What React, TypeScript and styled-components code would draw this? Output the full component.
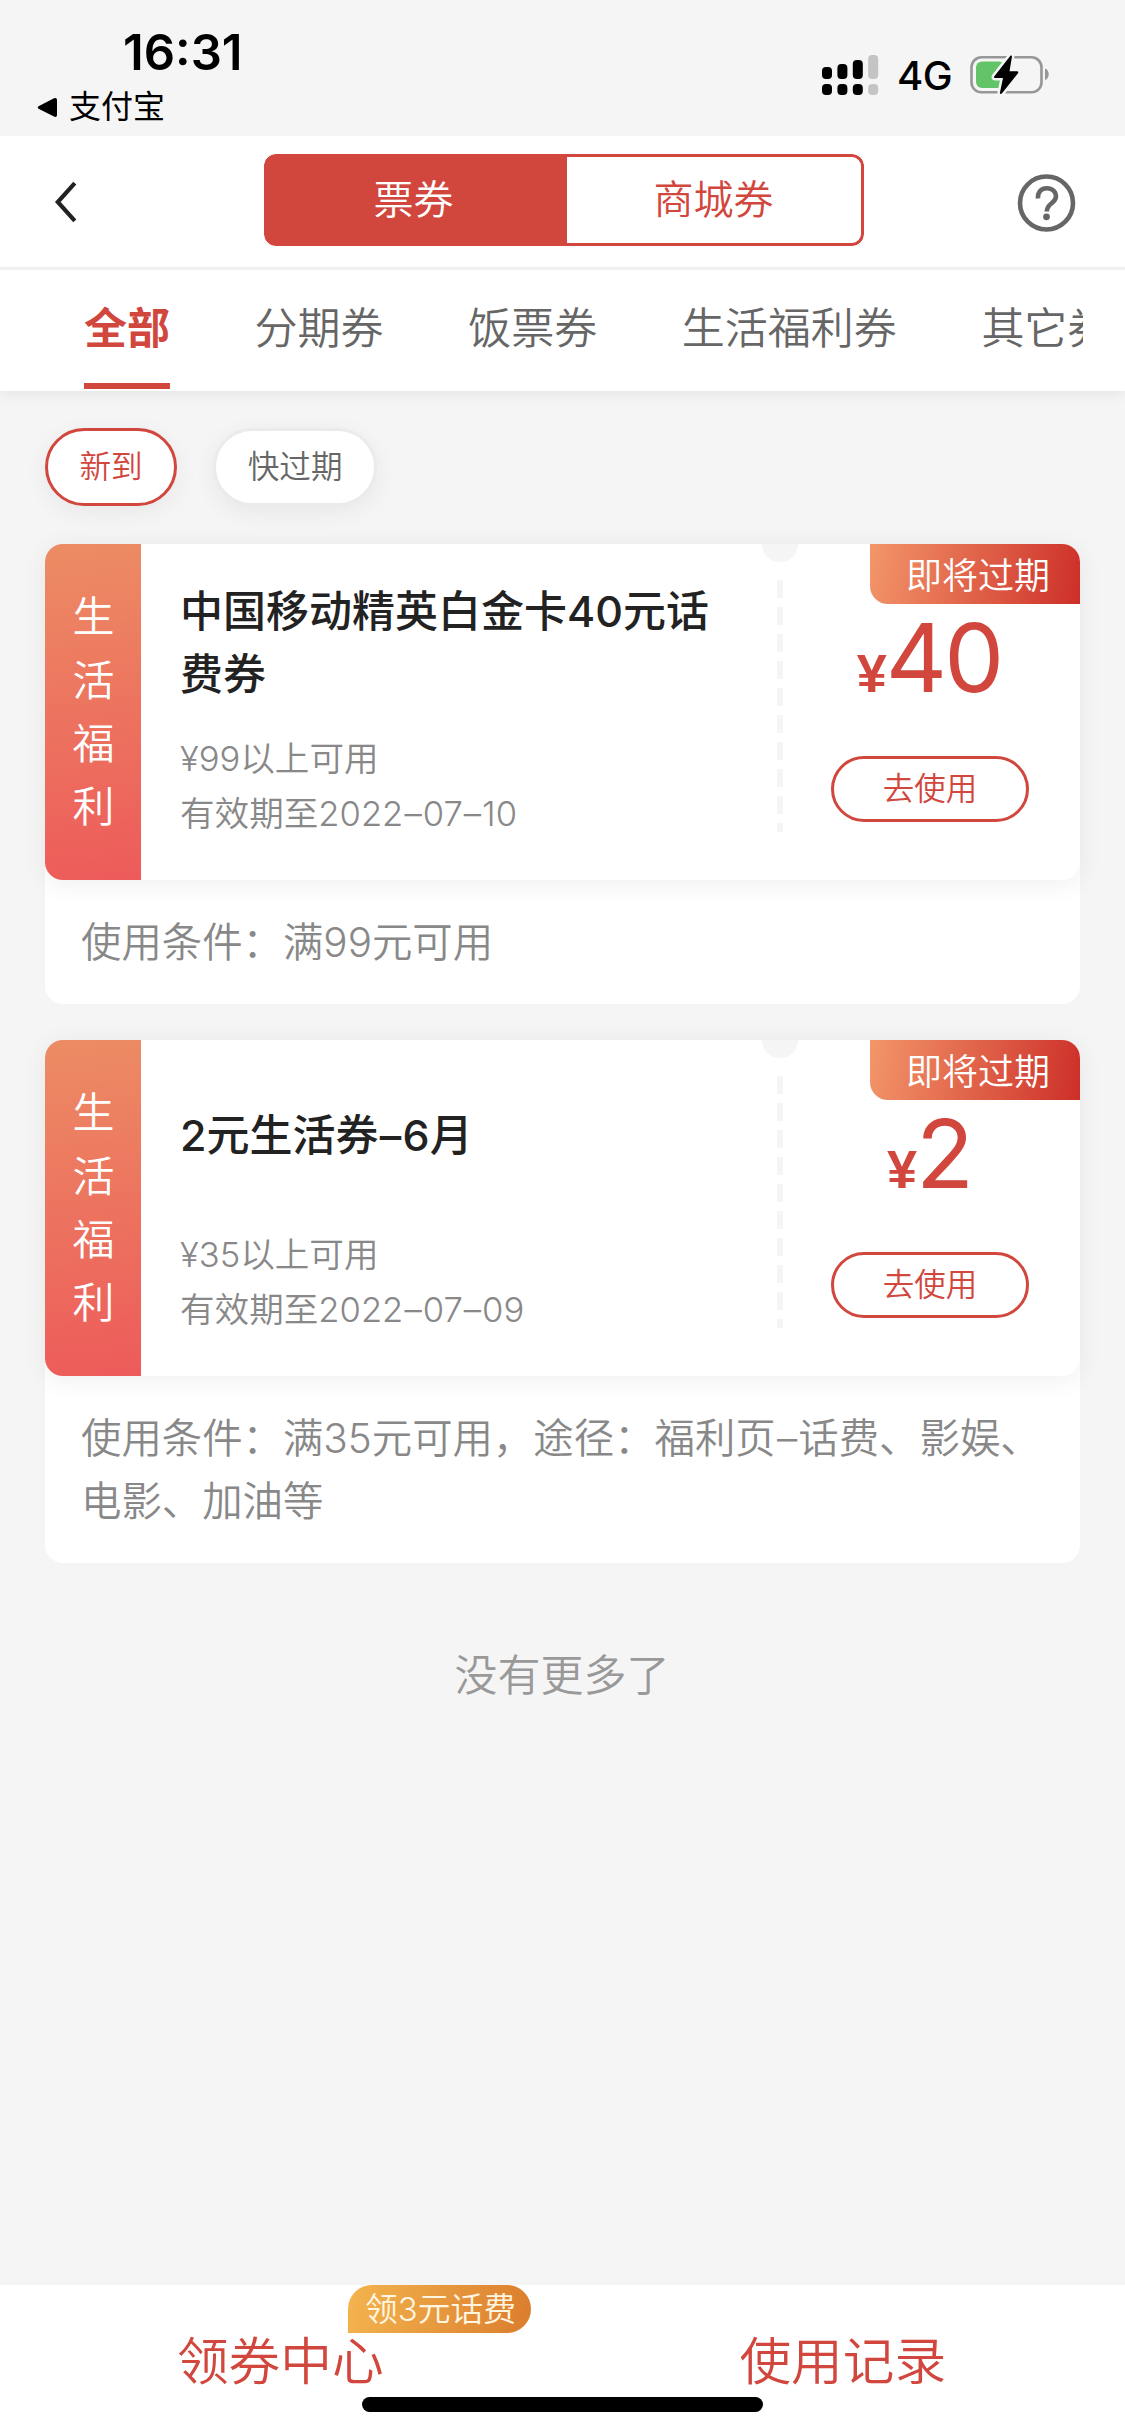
import React from "react";
import styled, { createGlobalStyle, css } from "styled-components";

const RED = "#d1463d";
const BG = "#f5f5f5";

const GlobalStyle = createGlobalStyle`
  *, *::before, *::after { box-sizing: border-box; }
  body {
    margin: 0;
    background: ${BG};
    font-family: Inter, "Noto Sans CJK SC", sans-serif;
    font-weight: 350;
    -webkit-font-smoothing: antialiased;
  }
  button { font: inherit; margin: 0; padding: 0; background: none; border: 0; }
`;

const Page = styled.div`
  width: 1125px;
  height: 2435px;
  display: flex;
  flex-direction: column;
  background: ${BG};
  overflow: hidden;
`;

/* ---------- status bar ---------- */
const StatusBar = styled.div`
  height: 136px;
  flex: none;
  display: flex;
  justify-content: space-between;
  color: #000;
`;
const StatusLeft = styled.div`
  padding: 29px 0 0 37px;
  display: flex;
  flex-direction: column;
`;
const Clock = styled.div`
  padding-left: 86px;
  font-size: 49px;
  line-height: 48px;
  font-weight: 600;
`;
const BackToApp = styled.div`
  display: flex;
  align-items: center;
  gap: 11px;
  margin-top: 11px;
  height: 38px;
  font-size: 32px;
  line-height: 38px;
  font-weight: 400;
`;
const StatusRight = styled.div`
  display: flex;
  align-items: flex-start;
  padding: 54px 74px 0 0;
`;
const Network = styled.div`
  margin: 1px 17px 0 18px;
  width: 56px;
  font-size: 40px;
  line-height: 42px;
  font-weight: 500;
  letter-spacing: -0.5px;
  white-space: nowrap;
`;

/* ---------- header ---------- */
const Header = styled.header`
  height: 134px;
  flex: none;
  display: flex;
  align-items: flex-start;
  justify-content: space-between;
  padding: 18px 49px 0 54px;
  background: #fff;
  border-bottom: 3px solid #f1f1f1;
`;
const IconButton = styled.button`
  display: flex;
  align-items: center;
  height: 96px;
  width: 60px;
`;
const Segment = styled.div`
  display: flex;
  width: 600px;
  height: 92px;
  margin-left: 150px;
  margin-right: auto;
  border-radius: 12px;
  overflow: hidden;
`;
const SegmentItem = styled.button<{ $active?: boolean }>`
  flex: 1;
  border: 3px solid ${RED};
  font-size: 40px;
  line-height: 60px;
  padding-right: 1px;
  ${({ $active }) =>
    $active
      ? css`
          color: #fff;
          background: ${RED};
          border-radius: 12px 0 0 12px;
        `
      : css`
          color: ${RED};
          background: #fff;
          border-radius: 0 12px 12px 0;
        `}
`;

/* ---------- tabs ---------- */
const TabBar = styled.nav`
  height: 121px;
  flex: none;
  padding: 0 42px;
  background: #fff;
  box-shadow: 0 2px 14px rgba(0, 0, 0, 0.08);
  clip-path: inset(0 0 -30px 0);
`;
const TabScroller = styled.div`
  display: flex;
  gap: 84.6px;
  padding-left: 42px;
  overflow: hidden;
  height: 119px;
`;
const Tab = styled.button<{ $active?: boolean }>`
  flex: none;
  height: 119px;
  display: flex;
  align-items: flex-start;
  padding-top: 27px;
  font-size: 43px;
  line-height: 62px;
  white-space: nowrap;
  color: ${({ $active }) => ($active ? RED : "#666")};
  font-weight: ${({ $active }) => ($active ? 700 : 350)};
  border-bottom: 6px solid ${({ $active }) => ($active ? RED : "transparent")};
`;

/* ---------- filters ---------- */
const Filters = styled.div`
  display: flex;
  gap: 36px;
  padding: 37px 45px 38px;
`;
const Chip = styled.button<{ $active?: boolean }>`
  height: 78px;
  padding: 0 31.5px;
  border-radius: 39px;
  border: 3px solid ${({ $active }) => ($active ? RED : "#ebebeb")};
  background: #fff;
  color: ${({ $active }) => ($active ? RED : "#666")};
  font-size: 31.6px;
  line-height: 48px;
  box-shadow: 0 6px 24px rgba(0, 0, 0, 0.06);
`;

/* ---------- coupons ---------- */
const List = styled.main`
  flex: 1;
  display: flex;
  flex-direction: column;
  gap: 36px;
  padding: 0 45px;
`;
const Card = styled.article`
  background: #fff;
  border-radius: 18px;
`;
const Ticket = styled.div`
  position: relative;
  display: flex;
  height: 336px;
  background: #fff;
  border-radius: 18px;
  box-shadow: 0 4px 26px rgba(0, 0, 0, 0.065);
`;
const Category = styled.div`
  width: 96px;
  flex: none;
  display: flex;
  flex-direction: column;
  align-items: center;
  justify-content: center;
  padding-left: 1px;
  border-radius: 18px 0 0 18px;
  background: linear-gradient(172deg, #ec8c64 0%, #ed5b5a 100%);
  color: #fff;
  font-size: 42px;
  line-height: 63.3px;
`;
const Info = styled.div`
  width: 591px;
  flex: none;
  display: flex;
  flex-direction: column;
  justify-content: space-between;
  padding: 35.5px 10px 39px 39px;
`;
const Title = styled.h2`
  margin: 0;
  width: 535px;
  min-height: 121px;
  display: flex;
  align-items: center;
  font-size: 43px;
  line-height: 63.5px;
  font-weight: 500;
  color: #222;
`;
const Meta = styled.p`
  margin: 0;
  font-size: 34.6px;
  line-height: 55px;
  color: #888;
`;
const MetaGroup = styled.div``;
const Dash = styled.span`
  padding: 0 0.03em;
`;
const Perforation = styled.div`
  width: 96px;
  flex: none;
  display: flex;
  flex-direction: column;
  align-items: center;
`;
const Notch = styled.div`
  width: 36px;
  height: 18px;
  border-radius: 0 0 18px 18px;
  background: ${BG};
`;
const Dashes = styled.div`
  width: 6px;
  height: 252px;
  margin-top: 18px;
  background: repeating-linear-gradient(to bottom, ${BG} 0 18px, transparent 18px 27px);
`;
const Side = styled.div`
  width: 198px;
  margin-left: 3px;
  display: flex;
  flex-direction: column;
  align-items: center;
`;
const Ribbon = styled.div`
  position: absolute;
  top: 0;
  right: 0;
  width: 210px;
  height: 60px;
  padding: 0 0 0 36px;
  border-radius: 0 18px 0 18px;
  background: linear-gradient(100deg, #f3966a 0%, #cd2f28 100%);
  color: #fff;
  font-size: 36px;
  line-height: 64px;
  white-space: nowrap;
`;
const Price = styled.div`
  height: 88px;
  margin-top: 70px;
  padding-right: 2px;
  display: flex;
  align-items: baseline;
  color: ${RED};
`;
const Currency = styled.span`
  margin-right: -1px;
  font-family: "Liberation Sans", sans-serif;
  font-size: 54px;
  font-weight: 700;
  line-height: 88px;
`;
const Amount = styled.span`
  font-size: 95px;
  font-weight: 400;
  line-height: 88px;
  letter-spacing: -3px;
`;
const UseButton = styled.button`
  width: 198px;
  height: 66px;
  margin-top: 54px;
  border: 3px solid ${RED};
  border-radius: 33px;
  color: ${RED};
  font-size: 31.5px;
  line-height: 48px;
`;
const Condition = styled.p`
  margin: 0;
  padding: 30.5px 36px;
  font-size: 40.4px;
  line-height: 63px;
  color: #888;
`;
const EndNote = styled.div`
  margin-top: 46px;
  padding-right: 1px;
  text-align: center;
  font-size: 43px;
  line-height: 60px;
  color: #999;
`;

/* ---------- footer ---------- */
const Footer = styled.footer`
  height: 150px;
  flex: none;
  display: grid;
  grid-template-columns: 1fr 1fr;
  grid-template-rows: 112px 15px;
  background: #fff;
`;
const FooterLink = styled.a`
  position: relative;
  display: flex;
  justify-content: center;
  padding: 41px 2px 0 0;
  font-size: 51.7px;
  line-height: 70px;
  color: ${RED};
`;
const PromoBadge = styled.span`
  position: absolute;
  top: 0;
  left: 348px;
  width: 183px;
  height: 48px;
  border-radius: 24px 24px 24px 0;
  background: linear-gradient(100deg, #f3b44e 0%, #db7d2d 100%);
  color: #fff6e2;
  font-size: 32.8px;
  line-height: 49px;
  padding-left: 2px;
  text-align: center;
  white-space: nowrap;
`;
const HomeIndicator = styled.div`
  grid-column: 1 / -1;
  justify-self: center;
  width: 401px;
  height: 15px;
  border-radius: 8px;
  background: #000;
`;

const SignalIcon = () => {
  const tops = [12, 9, 5, 0];
  return (
    <svg width="57" height="42" viewBox="0 0 57 42">
      {tops.map((t, i) => (
        <g key={i} fill={i === 3 ? "#c4c4c4" : "#000"}>
          <rect x={i * 15.4} y={t + 1} width="10" height={24 - t} rx="4" />
          <rect x={i * 15.4} y="30" width="10" height="11" rx="4" />
        </g>
      ))}
    </svg>
  );
};

const BatteryIcon = () => (
  <svg width="81" height="42" viewBox="0 0 81 42">
    <rect x="1.5" y="3.3" width="70" height="35" rx="10" fill="none" stroke="#979797" strokeWidth="2.6" />
    <path d="M75 14.5c5 1.5 5 10 0 11.5z" fill="#979797" />
    <rect x="6" y="7.5" width="29" height="26.5" rx="6" fill="#62c466" />
    <path
      d="M40.6 1.5 L24.2 22.4 Q23.5 24 25 24 L33 24 L29.8 39.3 Q30.5 40.8 32 39.3 L48 19.2 Q49 17.4 47 17.3 L39.5 17.3 L42 2.5 Q41.8 1 40.6 1.5z"
      fill="#000"
      stroke={BG}
      strokeWidth="5"
      paintOrder="stroke"
    />
  </svg>
);

/* Gives every en dash a little air on both sides. */
const Dashed = ({ text }: { text: string }) => (
  <span>
    {text.split("–").map((part, i) => (
      <React.Fragment key={i}>
        {i > 0 && <Dash>–</Dash>}
        {part}
      </React.Fragment>
    ))}
  </span>
);

const coupons = [
  {
    title: "中国移动精英白金卡40元话费券",
    amount: "40",
    limit: "¥99以上可用",
    expiry: "有效期至2022–07–10",
    condition: "使用条件：满99元可用",
  },
  {
    title: "2元生活券–6月",
    amount: "2",
    limit: "¥35以上可用",
    expiry: "有效期至2022–07–09",
    condition: "使用条件：满35元可用，途径：福利页–话费、影娱、电影、加油等",
  },
];

export default function App() {
  return (
    <>
      <GlobalStyle />
      <Page lang="zh-CN">
        <StatusBar>
          <StatusLeft>
            <Clock>16:31</Clock>
            <BackToApp>
              <svg width="21" height="21" viewBox="0 0 21 21">
                <path d="M2 9 L17 1.3 Q20 .3 20 3 L20 18 Q20 20.6 17 19.6 L2 12 Q-.6 10.5 2 9z" fill="#000" />
              </svg>
              支付宝
            </BackToApp>
          </StatusLeft>
          <StatusRight>
            <SignalIcon />
            <Network>4G</Network>
            <BatteryIcon />
          </StatusRight>
        </StatusBar>

        <Header>
          <IconButton aria-label="返回">
            <svg width="24" height="42" viewBox="0 0 24 42" fill="none" stroke="#222" strokeWidth="4.2">
              <path d="M20.8 2.2 L3.8 21 L20.8 39.8" />
            </svg>
          </IconButton>
          <Segment>
            <SegmentItem $active>票券</SegmentItem>
            <SegmentItem>商城券</SegmentItem>
          </Segment>
          <IconButton aria-label="帮助">
            <svg width="60" height="60" viewBox="0 0 60 60" fill="none" stroke="#666" strokeWidth="4.6">
              <circle cx="30.5" cy="31" r="26.5" />
              <path d="M22 26.5 C21.5 20 25 16.2 31 16.2 C37 16.2 40.5 20.5 39.8 25.5 C38.8 31.5 30.8 31.5 30.8 39.5" />
              <circle cx="30.5" cy="44.8" r="3.4" fill="#666" stroke="none" />
            </svg>
          </IconButton>
        </Header>

        <TabBar>
          <TabScroller>
            <Tab $active>全部</Tab>
            <Tab>分期券</Tab>
            <Tab>饭票券</Tab>
            <Tab>生活福利券</Tab>
            <Tab>其它券</Tab>
          </TabScroller>
        </TabBar>

        <Filters>
          <Chip $active>新到</Chip>
          <Chip>快过期</Chip>
        </Filters>

        <List>
          {coupons.map((c) => (
            <Card key={c.title}>
              <Ticket>
                <Category>
                  {[..."生活福利"].map((ch) => (
                    <span key={ch}>{ch}</span>
                  ))}
                </Category>
                <Info>
                  <Title>
                    <Dashed text={c.title} />
                  </Title>
                  <MetaGroup>
                    <Meta>{c.limit}</Meta>
                    <Meta>
                      <Dashed text={c.expiry} />
                    </Meta>
                  </MetaGroup>
                </Info>
                <Perforation>
                  <Notch />
                  <Dashes />
                </Perforation>
                <Side>
                  <Price>
                    <Currency>¥</Currency>
                    <Amount>{c.amount}</Amount>
                  </Price>
                  <UseButton>去使用</UseButton>
                </Side>
                <Ribbon>即将过期</Ribbon>
              </Ticket>
              <Condition>
                <Dashed text={c.condition} />
              </Condition>
            </Card>
          ))}
          <EndNote>没有更多了</EndNote>
        </List>

        <Footer>
          <FooterLink>
            领券中心
            <PromoBadge>领3元话费</PromoBadge>
          </FooterLink>
          <FooterLink>使用记录</FooterLink>
          <HomeIndicator />
        </Footer>
      </Page>
    </>
  );
}
